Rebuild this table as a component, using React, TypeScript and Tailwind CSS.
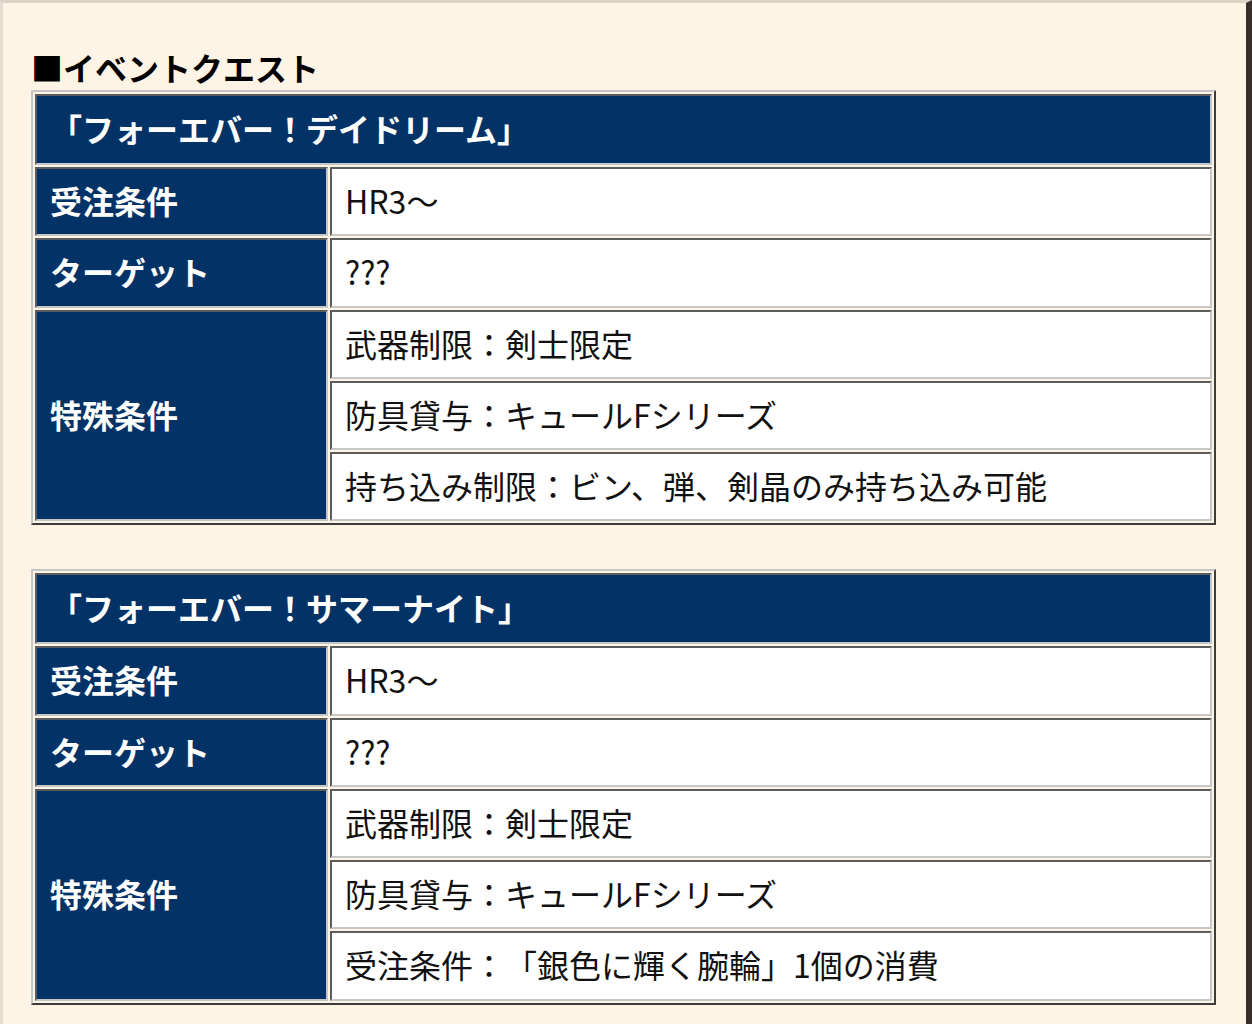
import React from "react";

type Quest = {
  title: string;
  order: string;
  target: string;
  special: string[];
};

const QUESTS: Quest[] = [
  {
    title: "「フォーエバー！デイドリーム」",
    order: "HR3～",
    target: "???",
    special: ["武器制限：剣士限定", "防具貸与：キュールFシリーズ", "持ち込み制限：ビン、弾、剣晶のみ持ち込み可能"],
  },
  {
    title: "「フォーエバー！サマーナイト」",
    order: "HR3～",
    target: "???",
    special: ["武器制限：剣士限定", "防具貸与：キュールFシリーズ", "受注条件：「銀色に輝く腕輪」1個の消費"],
  },
];

const labelCell =
  "h-[69.25px] bg-[#033366] text-white font-bold pl-[13px] pb-[3px] border-2 border-t-[#5c5c5c] border-l-[#5c5c5c] border-b-[#c6c6c6] border-r-[#c6c6c6]";
const valueCell =
  "h-[69.25px] bg-white text-[#111] pl-[13px] pb-[3px] whitespace-nowrap border-2 border-t-[#5c5c5c] border-l-[#5c5c5c] border-b-[#c6c6c6] border-r-[#c6c6c6]";

function QuestTable({ quest }: { quest: Quest }) {
  return (
    <table className="table-fixed w-[1185px] border-separate border-spacing-[2px] border-2 border-t-[#c6c6c6] border-l-[#c6c6c6] border-b-[#3c3c3c] border-r-[#3c3c3c] text-[32px] leading-[38px] [text-spacing-trim:space-all]">
      <colgroup>
        <col className="w-[293px]" />
        <col />
      </colgroup>
      <tbody>
        <tr>
          <td
            colSpan={2}
            className="h-[71px] bg-[#033366] text-white font-bold pl-[13px] pb-[4px] border-2 border-t-[#5c5c5c] border-l-[#5c5c5c] border-b-[#c6c6c6] border-r-[#c6c6c6]"
          >
            {quest.title}
          </td>
        </tr>
        <tr>
          <td className={labelCell}>受注条件</td>
          <td className={valueCell}>{quest.order}</td>
        </tr>
        <tr>
          <td className={labelCell}>ターゲット</td>
          <td className={valueCell}>{quest.target}</td>
        </tr>
        {quest.special.map((s, i) => (
          <tr key={i}>
            {i === 0 && (
              <td rowSpan={quest.special.length} className={labelCell}>
                特殊条件
              </td>
            )}
            <td className={valueCell}>{s}</td>
          </tr>
        ))}
      </tbody>
    </table>
  );
}

export default function App() {
  return (
    <div className="h-[1024px] overflow-hidden bg-[#fef4e6] border-t-[3px] border-t-[#dcd3c6] border-l-[3px] border-l-[#e6ddd0] border-r-[6px] border-r-[#3a302b] font-['Noto_Sans_CJK_JP','Noto_Sans',sans-serif] [text-spacing-trim:space-all]">
      <div className="pl-[28px] pt-[45px]">
        <h2 className="text-[32px] leading-[38px] font-bold text-black mb-[4px]">■イベントクエスト</h2>
        <div className="flex flex-col gap-[44px]">
          {QUESTS.map((q) => (
            <QuestTable key={q.title} quest={q} />
          ))}
        </div>
      </div>
    </div>
  );
}
